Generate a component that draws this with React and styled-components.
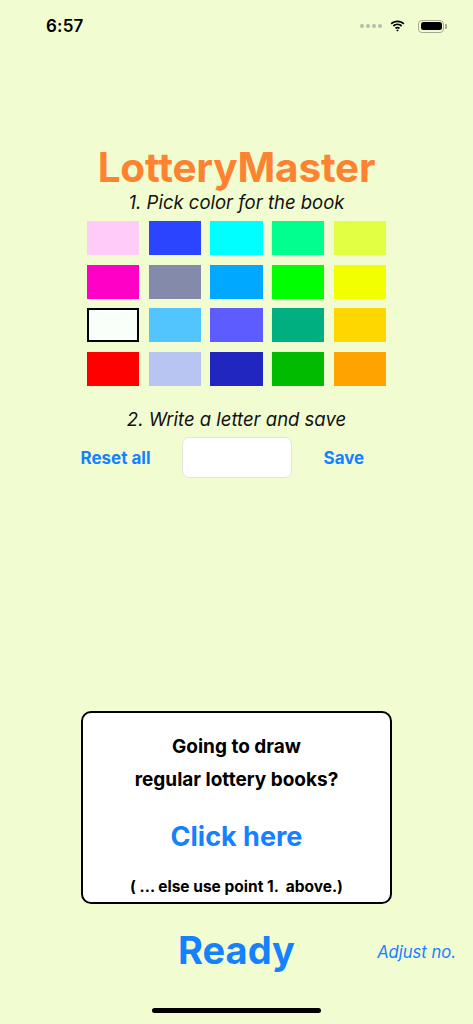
import React from "react";
import styled, { createGlobalStyle } from "styled-components";

const Global = createGlobalStyle`
  html, body { margin: 0; padding: 0; background: #F1FDD1; }
  * { box-sizing: border-box; }
  body { font-family: Inter, "Noto Sans", "Liberation Sans", sans-serif; }
`;

const BLUE = "#1681FF";

const Page = styled.div`
  width: 473px;
  height: 1024px;
  background: #F1FDD1;
  display: flex;
  flex-direction: column;
  align-items: center;
  overflow: hidden;
`;

const StatusBar = styled.div`
  width: 100%;
  height: 52px;
  display: flex;
  align-items: center;
  justify-content: space-between;
  padding: 0 26px 0 46px;
`;

const Time = styled.span`
  font-size: 17px;
  font-weight: 600;
  color: #000;
  letter-spacing: 0.2px;
`;

const StatusIcons = styled.div`
  display: flex;
  align-items: center;
  gap: 6px;
`;

const Dots = styled.div`
  display: flex;
  gap: 2px;
  margin-right: 2px;
`;

const Dot = styled.span`
  width: 4px;
  height: 4px;
  border-radius: 50%;
  background: #B7BCA8;
`;

const Battery = styled.div`
  display: flex;
  align-items: center;
  margin-left: 7px;
`;

const BatteryBody = styled.div`
  width: 26px;
  height: 13px;
  border: 1px solid #A6AA95;
  border-radius: 4px;
  padding: 1.5px;
  display: flex;
`;

const BatteryFill = styled.div`
  flex: 1;
  background: #000;
  border-radius: 2.5px;
`;

const BatteryCap = styled.div`
  width: 2px;
  height: 5px;
  margin-left: 1px;
  background: #A6AA95;
  border-radius: 0 1px 1px 0;
`;

const Title = styled.h1`
  margin: 93px 0 0;
  font-size: 40.5px;
  line-height: 46px;
  font-weight: 700;
  color: #FF8231;
  letter-spacing: -0.2px;
`;

const Label = styled.p`
  margin: ${(p) => p.$mt}px 0 0;
  font-size: 18.5px;
  line-height: 24px;
  font-style: italic;
  color: #111;
`;

const Grid = styled.div`
  margin-top: 7px;
  display: grid;
  grid-template-columns: repeat(5, 52.6px);
  grid-auto-rows: 34px;
  column-gap: 9.1px;
  row-gap: 9.7px;
`;

const Swatch = styled.div`
  background: ${(p) => p.$color};
  border: ${(p) => (p.$selected ? "2.5px solid #000" : "none")};
`;

const InputRow = styled.div`
  margin-top: 6px;
  width: 100%;
  display: grid;
  grid-template-columns: 1fr 110px 1fr;
  column-gap: 31px;
  align-items: center;
`;

const LinkButton = styled.span`
  justify-self: ${(p) => p.$side};
  padding-left: ${(p) => (p.$side === "start" ? 1 : 0)}px;
  font-size: 17px;
  font-weight: 700;
  color: ${BLUE};
`;

const LetterInput = styled.div`
  height: 41px;
  background: #fff;
  border: 1px solid #E2E6D8;
  border-radius: 7px;
`;

const Card = styled.div`
  margin-top: 233px;
  width: 311px;
  height: 193px;
  background: #fff;
  border: 2px solid #000;
  border-radius: 10px;
  display: flex;
  flex-direction: column;
  align-items: center;
  padding-top: 17px;
`;

const CardLine = styled.div`
  font-size: 19px;
  line-height: 33px;
  font-weight: 700;
  color: #000;
`;

const ClickHere = styled.div`
  margin-top: 21px;
  font-size: 27px;
  line-height: 40px;
  font-weight: 700;
  color: ${BLUE};
`;

const Note = styled.div`
  margin-top: 20px;
  font-size: 15.5px;
  line-height: 20px;
  font-weight: 700;
  color: #000;
  white-space: pre;
`;

const BottomRow = styled.div`
  margin-top: 23px;
  width: 100%;
  display: grid;
  grid-template-columns: 1fr auto 1fr;
  align-items: center;
`;

const Ready = styled.div`
  grid-column: 2;
  font-size: 38px;
  line-height: 46px;
  font-weight: 700;
  color: ${BLUE};
`;

const Adjust = styled.div`
  justify-self: end;
  padding-right: 17px;
  padding-top: 4px;
  font-size: 16.6px;
  font-style: italic;
  color: ${BLUE};
`;

const HomeIndicator = styled.div`
  margin-top: auto;
  margin-bottom: 11px;
  width: 169px;
  height: 5px;
  border-radius: 3px;
  background: #000;
`;

const colors = [
  "#FFCCF8", "#2B44FF", "#00FFFF", "#00FF8C", "#E3FF44",
  "#FF00C6", "#848AAA", "#00A8FF", "#00FF00", "#F2FF00",
  "#F9FFF9", "#52C5FF", "#5D5DFF", "#00AF7F", "#FFD700",
  "#FF0000", "#B8C5F2", "#2126C0", "#00BB00", "#FFA300",
];

const Wifi = () => (
  <svg width="15" height="12" viewBox="0 0 15 12">
    <path
      d="M7.5 2.2c2.2 0 4.2.85 5.7 2.25l1.2-1.25C12.6 1.45 10.15.4 7.5.4S2.4 1.45.6 3.2l1.2 1.25C3.3 3.05 5.3 2.2 7.5 2.2z"
      fill="#000"
    />
    <path
      d="M7.5 5.3c1.350 0 2.55.5 3.5 1.35l1.2-1.25C10.95 4.25 9.3 3.55 7.5 3.55s-3.45.7-4.7 1.85L4 6.65c.95-.85 2.15-1.35 3.5-1.35z"
      fill="#000"
    />
    <path
      d="M7.5 8.4c.55 0 1.05.2 1.4.5l1.25-1.25C9.45 7.05 8.5 6.7 7.5 6.7s-1.950.35-2.65.95L6.1 8.9c.35-.3.85-.5 1.4-.5zM7.5 11.6l1.3-1.35c-.35-.3-.8-.45-1.3-.45s-.95.15-1.3.45z"
      fill="#000"
    />
  </svg>
);

export default function App() {
  return (
    <>
      <Global />
      <Page>
        <StatusBar>
          <Time>6:57</Time>
          <StatusIcons>
            <Dots>
              <Dot /><Dot /><Dot /><Dot />
            </Dots>
            <Wifi />
            <Battery>
              <BatteryBody><BatteryFill /></BatteryBody>
              <BatteryCap />
            </Battery>
          </StatusIcons>
        </StatusBar>

        <Title>LotteryMaster</Title>
        <Label $mt={-1}>1. Pick color for the book</Label>

        <Grid>
          {colors.map((c, i) => (
            <Swatch key={i} $color={c} $selected={i === 10} />
          ))}
        </Grid>

        <Label $mt={21}>2. Write a letter and save</Label>

        <InputRow>
          <LinkButton $side="end">Reset all</LinkButton>
          <LetterInput />
          <LinkButton $side="start">Save</LinkButton>
        </InputRow>

        <Card>
          <CardLine>Going to draw</CardLine>
          <CardLine>regular lottery books?</CardLine>
          <ClickHere>Click here</ClickHere>
          <Note>( ... else use point 1.  above.)</Note>
        </Card>

        <BottomRow>
          <Ready>Ready</Ready>
          <Adjust>Adjust no.</Adjust>
        </BottomRow>

        <HomeIndicator />
      </Page>
    </>
  );
}
